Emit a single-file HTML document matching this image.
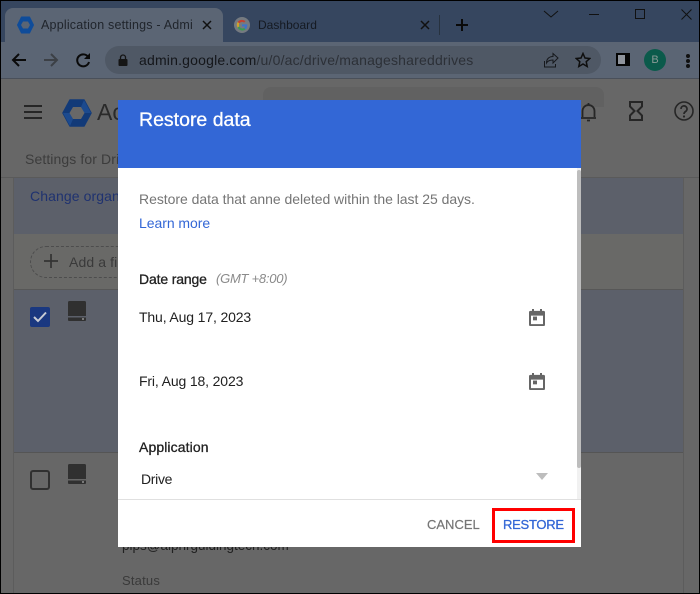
<!DOCTYPE html>
<html><head><meta charset="utf-8"><style>
html,body{margin:0;padding:0;background:#676767}
#r{position:relative;width:700px;height:594px;overflow:hidden;background:#676767;font-family:"Liberation Sans",sans-serif}
#r div,#r svg{position:absolute}
.t{white-space:nowrap;line-height:20px}
</style></head><body><div id="r">
<div style="left:0;top:0;width:700px;height:42px;background:#36465f"></div>
<div style="left:5px;top:8px;width:218px;height:34px;background:#5b6574;border-radius:8px 8px 0 0"></div>
<div style="left:0;top:42px;width:700px;height:36px;background:#5b6574"></div>
<div style="left:0;top:78px;width:700px;height:1px;background:#4a505a"></div>
<svg style="left:17px;top:16px" width="17" height="18" viewBox="0 0 17 18"><path d="M4.500 1h8L16.500 9l-4 8h-8L.5 9z" fill="#0f4c9a" stroke="#0f4c9a" stroke-linejoin="round"/><path d="M6 5.500h5L13 9l-2 3.500H6L4 9z" fill="#5b6574"/></svg>
<div class="t" style="left:41px;top:15px;width:151px;overflow:hidden;font-size:12.500px;color:#20252c;letter-spacing:.2px">Application settings - Admin</div>
<svg style="left:202px;top:20px" width="10" height="10"><path d="M1 1l8 8M9 1l-8 8" stroke="#111" stroke-width="1.500"/></svg>
<svg style="left:234px;top:17px" width="16" height="16" viewBox="0 0 48 48"><circle cx="24" cy="24" r="24" fill="#757a80"/><path d="M40 22H24v6h9a9.500 9.500 0 0 1-3 5l5 4c3-3 5.500-8 5-15z" fill="#3f73c8"/><path d="M11 15l5 4a9.500 9.500 0 0 1 14-2l4.500-4.500A16 16 0 0 0 11 15z" fill="#c2402f"/><path d="M11 15a16 16 0 0 0 0 17l5-4a9.500 9.500 0 0 1 0-9z" fill="#cfa42a"/><path d="M11 32a16 16 0 0 0 24 5l-5-4a9.500 9.500 0 0 1-14-5z" fill="#3c9a52"/></svg>
<div class="t" style="left:258px;top:15px;font-size:12px;color:#151a22;letter-spacing:.02px">Dashboard</div>
<svg style="left:420px;top:20px" width="10" height="10"><path d="M1 1l8 8M9 1l-8 8" stroke="#111" stroke-width="1.500"/></svg>
<div style="left:439px;top:15px;width:1px;height:20px;background:#27323f"></div>
<svg style="left:456px;top:19px" width="12" height="12"><path d="M6 0v12M0 6h12" stroke="#0a0a0a" stroke-width="2"/></svg>
<svg style="left:543px;top:9px" width="16" height="10"><path d="M1 2l7 6 7-6" stroke="#111" fill="none" stroke-width="1"/></svg>
<div style="left:589px;top:14px;width:10px;height:1px;background:#111"></div>
<div style="left:635px;top:9px;width:8px;height:8px;border:1px solid #111"></div>
<svg style="left:681px;top:9px" width="11" height="11"><path d="M.5.500l10 10M10.500.500l-10 10" stroke="#111"/></svg>
<svg style="left:11px;top:52px" width="16" height="16"><path d="M15 8H2M8 2L2 8l6 6" fill="none" stroke="#0a0a0a" stroke-width="2"/></svg>
<svg style="left:43px;top:52px" width="16" height="16"><path d="M1 8h13M8 2l6 6-6 6" fill="none" stroke="#3c4046" stroke-width="2"/></svg>
<svg style="left:75px;top:52px" width="16" height="16" viewBox="0 0 16 16"><path d="M13.500 5.500A6 6 0 1 0 14 10" fill="none" stroke="#0a0a0a" stroke-width="2"/><path d="M15 1v6H9z" fill="#0a0a0a"/></svg>
<div style="left:105px;top:46px;width:496px;height:28px;border-radius:14px;background:#4f5865"></div>
<svg style="left:118px;top:54px" width="10" height="12"><path d="M2.500 5V3.500a2.500 2.500 0 0 1 5 0V5" fill="none" stroke="#151515" stroke-width="1.300"/><rect x="0.500" y="5" width="9" height="7" rx="1" fill="#151515"/></svg>
<div class="t" style="left:139px;top:50px;font-size:14px;color:#2c3037;letter-spacing:.19px"><span style="color:#14161a">admin.google.com</span>/u/0/ac/drive/manageshareddrives</div>
<svg style="left:543px;top:52px" width="16" height="16" viewBox="0 0 16 16"><path d="M1.500 9v6h11v-3M15 6L10 1.500v3C6 4.500 3.500 7 3.500 11c1.500-2.500 3.500-3 6.500-3v3z" fill="none" stroke="#16181c" stroke-width="1"/></svg>
<svg style="left:575px;top:52px" width="16" height="16" viewBox="0 0 16 16"><path d="M8 1.500l2 4.500 4.800.500-3.600 3.200 1 4.800L8 12l-4.200 2.500 1-4.800L1.200 6.500 6 6z" fill="none" stroke="#0e0e0e" stroke-width="1.500"/></svg>
<div style="left:616px;top:53px;width:14px;height:13px;background:#050505"></div>
<div style="left:618px;top:55px;width:7px;height:9px;background:#8f949c"></div>
<div style="left:644px;top:49px;width:22px;height:22px;border-radius:11px;background:#0b5a4b"></div>
<div class="t" style="left:644px;top:50px;width:22px;text-align:center;font-size:11px;color:#8a9a96">B</div>
<div style="left:686px;top:54px;width:3.500px;height:3.500px;border-radius:2px;background:#111"></div>
<div style="left:686px;top:59px;width:3.500px;height:3.500px;border-radius:2px;background:#111"></div>
<div style="left:686px;top:64px;width:3.500px;height:3.500px;border-radius:2px;background:#111"></div>
<!-- page -->
<div style="left:24px;top:105px;width:18px;height:2px;background:#262626"></div>
<div style="left:24px;top:111px;width:18px;height:2px;background:#262626"></div>
<div style="left:24px;top:117px;width:18px;height:2px;background:#262626"></div>
<svg style="left:62px;top:99px" width="30" height="28" viewBox="0 0 30 28"><path d="M8 1h14L29 14 22 27H8L1 14z" fill="#123a78" stroke="#123a78" stroke-width="1.500" stroke-linejoin="round"/><path d="M22 1l7 13h-7l-3-6zM8 27l-7-13h7l3 6z" fill="#1c4a8e"/><path d="M11 8h8l3.500 6-3.500 6h-8l-3.500-6z" fill="#686868"/></svg>
<div class="t" style="left:97px;top:100px;font-size:23px;line-height:24px;color:#2a2a2a">Ac</div>
<div style="left:263px;top:87px;width:341px;height:20px;background:#616161;border-radius:8px 8px 0 0"></div>
<svg style="left:580px;top:101px" width="17" height="21" viewBox="0 0 17 21"><path d="M2.500 16V10a6 6 0 0 1 12 0v6M1 17h15M7 19.500h3M8.500 2v2" fill="none" stroke="#262626" stroke-width="1.800"/></svg>
<svg style="left:629px;top:101px" width="14" height="20" viewBox="0 0 14 20"><path d="M1 1h12v4.500L8.500 10l4.500 4.500V19H1v-4.500L5.500 10 1 5.500z" fill="none" stroke="#262626" stroke-width="2"/></svg>
<svg style="left:674px;top:101px" width="20" height="20" viewBox="0 0 20 20"><circle cx="10" cy="10" r="9" fill="none" stroke="#262626" stroke-width="1.600"/><path d="M7 8a3 3 0 1 1 4.500 2.500C10.500 11.200 10 11.700 10 13" fill="none" stroke="#262626" stroke-width="1.700"/><circle cx="10" cy="15.500" r="1.100" fill="#262626"/></svg>
<div class="t" style="left:25px;top:149px;font-size:14px;color:#3c3c3c;letter-spacing:.1px">Settings for Dri</div>
<div style="left:0;top:177px;width:700px;height:1px;background:#5a5a5a"></div>
<div style="left:14px;top:178px;width:669px;height:56px;background:#5c606a"></div>
<div class="t" style="left:30px;top:186px;font-size:14px;color:#1f3270;letter-spacing:.1px">Change organ</div>
<div style="left:14px;top:234px;width:669px;height:55px;background:#696967"></div>
<div style="left:30px;top:246px;width:120px;height:30px;border:1px dashed #4d4d4d;border-radius:16px"></div>
<svg style="left:44px;top:254px" width="14" height="14"><path d="M7 0v14M0 7h14" stroke="#333" stroke-width="1.700"/></svg>
<div class="t" style="left:69px;top:252px;font-size:14px;color:#3a3a3a;letter-spacing:.1px">Add a fil</div>
<div style="left:14px;top:289px;width:669px;height:1px;background:#575757"></div>
<div style="left:14px;top:290px;width:669px;height:163px;background:#5c606a"></div>
<div style="left:14px;top:452px;width:669px;height:1px;background:#555"></div>
<div style="left:13px;top:178px;width:1px;height:416px;background:#5c5c5c"></div>
<div style="left:683px;top:178px;width:1px;height:416px;background:#5c5c5c"></div>
<div style="left:30px;top:307px;width:20px;height:20px;background:#1a3880;border-radius:2px"></div>
<svg style="left:33px;top:311px" width="14" height="12"><path d="M1 6l4 4 8-8.500" fill="none" stroke="#c8ccd4" stroke-width="2"/></svg>
<svg style="left:68px;top:301px" width="18" height="20"><path d="M1.500 0h15a1.500 1.500 0 0 1 1.500 1.500V15H0V1.500A1.500 1.500 0 0 1 1.500 0zM0 16.500h18V19a1 1 0 0 1-1 1H1a1 1 0 0 1-1-1z" fill="#303030"/><rect x="14" y="17" width="2" height="2" fill="#7a7a7a"/></svg>
<div style="left:30px;top:470px;width:16px;height:16px;border:2px solid #303030;border-radius:3px"></div>
<svg style="left:68px;top:464px" width="18" height="20"><path d="M1.500 0h15a1.500 1.500 0 0 1 1.500 1.500V15H0V1.500A1.500 1.500 0 0 1 1.500 0zM0 16.500h18V19a1 1 0 0 1-1 1H1a1 1 0 0 1-1-1z" fill="#303030"/><rect x="14" y="17" width="2" height="2" fill="#7a7a7a"/></svg>
<div class="t" style="left:122px;top:536px;font-size:13.500px;color:#202020">pips@alphrguidingtech.com</div>
<div class="t" style="left:122px;top:571px;font-size:13px;color:#3a3a3a;letter-spacing:.2px">Status</div>
<!-- dialog -->
<div style="left:118px;top:100px;width:463px;height:447px;background:#fff"></div>
<div style="left:118px;top:100px;width:463px;height:68px;background:#3367d6"></div>
<div class="t" style="left:139px;top:108px;font-size:19.500px;line-height:24px;color:#fff;-webkit-text-stroke:.3px #fff">Restore data</div>
<div style="left:577px;top:168px;width:4px;height:331px;background:#f1f1f1"></div>
<div style="left:577px;top:170px;width:4px;height:298px;background:#bdbdbd;border-radius:2px"></div>
<div class="t" style="left:139px;top:189px;font-size:14px;color:#757575;letter-spacing:-.035px">Restore data that anne deleted within the last 25 days.</div>
<div class="t" style="left:139px;top:213px;font-size:14px;color:#3367d6;letter-spacing:-.05px">Learn more</div>
<div class="t" style="left:139px;top:269px;font-size:14px;color:#212121;letter-spacing:-.15px;-webkit-text-stroke:.3px #212121">Date range</div>
<div class="t" style="left:216px;top:269px;font-size:13px;color:#8a8a8a;font-style:italic;letter-spacing:-.25px">(GMT +8:00)</div>
<div class="t" style="left:139px;top:307px;font-size:14px;color:#212121;letter-spacing:-.14px">Thu, Aug 17, 2023</div>
<div class="t" style="left:139px;top:371px;font-size:14px;color:#212121;letter-spacing:-.14px">Fri, Aug 18, 2023</div>
<svg style="left:529px;top:309px" width="16" height="17" viewBox="0 0 16 18" preserveAspectRatio="none"><path d="M3 0h2v2h6V0h2v2h1.500A1.500 1.500 0 0 1 16 3.500v13a1.500 1.500 0 0 1-1.500 1.500h-13A1.500 1.500 0 0 1 0 16.500v-13A1.500 1.500 0 0 1 1.500 2H3zM2 7v9h12V7z" fill="#666"/><rect x="4" y="8" width="4" height="4" fill="#666"/></svg>
<svg style="left:529px;top:373px" width="16" height="17" viewBox="0 0 16 18" preserveAspectRatio="none"><path d="M3 0h2v2h6V0h2v2h1.500A1.500 1.500 0 0 1 16 3.500v13a1.500 1.500 0 0 1-1.500 1.500h-13A1.500 1.500 0 0 1 0 16.500v-13A1.500 1.500 0 0 1 1.500 2H3zM2 7v9h12V7z" fill="#666"/><rect x="4" y="8" width="4" height="4" fill="#666"/></svg>
<div class="t" style="left:139px;top:437px;font-size:14px;color:#212121;letter-spacing:.1px;-webkit-text-stroke:.3px #212121">Application</div>
<div class="t" style="left:141px;top:469px;font-size:14px;color:#212121;letter-spacing:-.3px">Drive</div>
<svg style="left:536px;top:473px" width="12" height="7"><path d="M0 0h12L6 7z" fill="#bdbdbd"/></svg>
<div style="left:118px;top:499px;width:463px;height:1px;background:#e0e0e0"></div>
<div class="t" style="left:427px;top:515px;font-size:13px;color:#757575;letter-spacing:0;-webkit-text-stroke:.2px #757575">CANCEL</div>
<div class="t" style="left:503px;top:515px;font-size:13px;color:#3367d6;letter-spacing:-.25px;-webkit-text-stroke:.3px #3367d6">RESTORE</div>
<div style="left:492px;top:508px;width:77px;height:29px;border:3px solid #f00"></div>
<!-- window border -->
<div style="left:0;top:0;width:700px;height:1px;background:#000"></div>
<div style="left:0;top:0;width:1px;height:594px;background:#000"></div>
<div style="left:0;top:593px;width:700px;height:1px;background:#000"></div>
<div style="left:699px;top:0;width:1px;height:594px;background:#000"></div>
</div></body></html>
